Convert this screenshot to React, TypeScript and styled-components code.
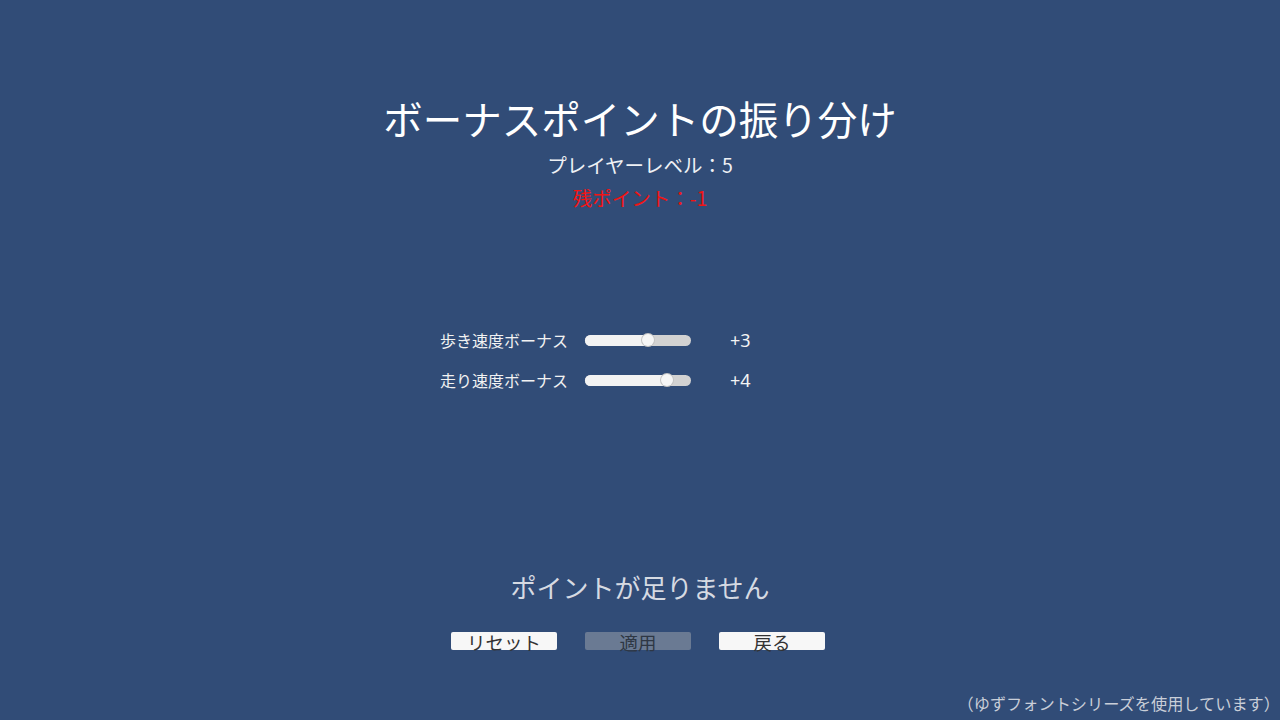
import React from "react";
import styled, { createGlobalStyle } from "styled-components";

const GlobalStyle = createGlobalStyle`
  html, body {
    margin: 0;
    padding: 0;
    background: #314c77;
  }
  #root {
    width: 1280px;
    height: 720px;
  }
`;

const Page = styled.div`
  width: 1280px;
  height: 720px;
  background: #314c77;
  display: flex;
  flex-direction: column;
  align-items: center;
  box-sizing: border-box;
  padding-top: 94px;
  font-family: "Noto Sans CJK JP", "Noto Sans", sans-serif;
  color: #f4f4f4;
  overflow: hidden;
`;

const Title = styled.h1`
  margin: 0;
  font-size: 39.5px;
  line-height: 48px;
  font-weight: 400;
  color: #ffffff;
  white-space: nowrap;
`;

const InfoLine = styled.div<{ $tone?: "warn" }>`
  font-size: 19.5px;
  line-height: 24px;
  color: ${(p) => (p.$tone === "warn" ? "#f21414" : "#eef0f4")};
  margin-top: ${(p) => (p.$tone === "warn" ? "9px" : "11px")};
  white-space: nowrap;
`;

const Rows = styled.div`
  margin-top: 118px;
  display: grid;
  grid-template-columns: 148px 106px 152px;
  column-gap: 17px;
  row-gap: 16px;
  align-items: center;
`;

const RowLabel = styled.div`
  font-size: 16px;
  line-height: 24px;
  text-align: right;
  color: #f2f2f2;
  white-space: nowrap;
`;

const Track = styled.div`
  position: relative;
  height: 11px;
  border-radius: 6px;
  background: #d2d2d2;
`;

const Fill = styled.div`
  position: absolute;
  left: 0;
  top: 0;
  bottom: 0;
  border-radius: 6px 0 0 6px;
  background: #f3f3f3;
`;

const Knob = styled.div`
  position: absolute;
  top: 50%;
  width: 12px;
  height: 12px;
  margin-left: -6px;
  margin-top: -6px;
  border-radius: 50%;
  background: #f6f6f6;
  box-shadow: 0 0 0 1px #c4c4c4;
`;

const RowValue = styled.div`
  font-size: 18px;
  line-height: 24px;
  padding-left: 22px;
  color: #f4f4f4;
  font-family: "Liberation Sans Narrow", "Noto Sans", sans-serif;
`;

const Message = styled.div`
  margin-top: 179px;
  font-size: 26px;
  line-height: 32px;
  color: #d6dae2;
  white-space: nowrap;
`;

const ButtonBar = styled.div`
  margin-top: 29px;
  display: flex;
  gap: 28px;
  padding-right: 4px;
`;

const Button = styled.button<{ $disabled?: boolean }>`
  width: 106px;
  height: 18px;
  padding: 2px 0 0;
  border: none;
  border-radius: 2px;
  background: ${(p) => (p.$disabled ? "#6a7a93" : "#f7f7f7")};
  color: ${(p) => (p.$disabled ? "#2e3744" : "#333333")};
  font-family: "Noto Sans CJK JP", "Noto Sans", sans-serif;
  font-size: 18.5px;
  line-height: 18px;
  display: flex;
  align-items: center;
  justify-content: center;
  overflow: visible;
  cursor: pointer;
`;

const Footer = styled.div`
  margin-top: auto;
  align-self: flex-end;
  padding: 0 0 7px 0;
  font-size: 16.2px;
  line-height: 20px;
  color: #c9ced8;
  white-space: nowrap;
`;

type Bonus = { label: string; value: number };

const bonuses: Bonus[] = [
  { label: "歩き速度ボーナス", value: 3 },
  { label: "走り速度ボーナス", value: 4 },
];

const MAX = 5;
const TRACK = 106;
const PAD = 5;

function Slider({ value }: { value: number }) {
  const pos = PAD + ((TRACK - PAD * 2) * value) / MAX;
  return (
    <Track>
      <Fill style={{ width: `${pos}px` }} />
      <Knob style={{ left: `${pos}px` }} />
    </Track>
  );
}

export default function App() {
  return (
    <>
      <GlobalStyle />
      <Page>
        <Title>ボーナスポイントの振り分け</Title>
        <InfoLine>プレイヤーレベル：5</InfoLine>
        <InfoLine $tone="warn">残ポイント：-1</InfoLine>
        <Rows>
          {bonuses.map((b) => (
            <React.Fragment key={b.label}>
              <RowLabel>{b.label}</RowLabel>
              <Slider value={b.value} />
              <RowValue>+{b.value}</RowValue>
            </React.Fragment>
          ))}
        </Rows>
        <Message>ポイントが足りません</Message>
        <ButtonBar>
          <Button>リセット</Button>
          <Button $disabled>適用</Button>
          <Button>戻る</Button>
        </ButtonBar>
        <Footer>（ゆずフォントシリーズを使用しています）</Footer>
      </Page>
    </>
  );
}
